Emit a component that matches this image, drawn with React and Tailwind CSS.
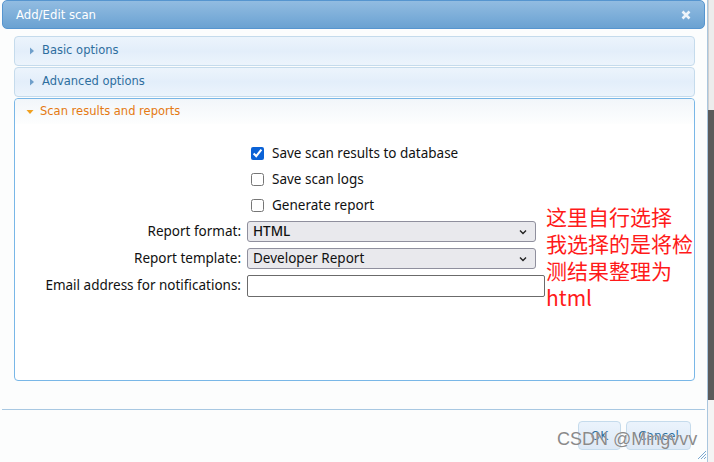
import React from 'react';

const ui = { fontFamily: '"DejaVu Sans", Verdana, sans-serif' };
const form = { fontFamily: '"Noto Sans", Tahoma, sans-serif' };

function Arrow({ open, color }) {
    return open ? (
        <svg width="8" height="8" viewBox="0 0 8 8" className="shrink-0">
            <path d="M0.5 2 L7.5 2 L4 6 Z" fill={color} />
        </svg>
    ) : (
        <svg width="8" height="8" viewBox="0 0 8 8" className="shrink-0">
            <path d="M2 0.5 L6 4 L2 7.5 Z" fill={color} />
        </svg>
    );
}

function Chevron() {
    return (
        <svg width="10" height="10" viewBox="0 0 10 10" className="shrink-0">
            <path d="M2 3.5 L5 6.5 L8 3.5" fill="none" stroke="#222" strokeWidth="1.4" />
        </svg>
    );
}

function ClosedPanel({ title }) {
    return (
        <div className="h-[30px] flex items-center gap-[6px] pl-[13px] rounded-[4px] border border-[#c5dbec] bg-gradient-to-b from-[#ecf4fc] via-[#e3eefa] to-[#ecf4fc] text-[#2e6e9e] text-[11.5px]" style={ui}>
            <Arrow color="#6f9fca" />
            <span>{title}</span>
        </div>
    );
}

function Check({ checked, label }) {
    return (
        <label className="h-[26px] flex items-center gap-[8px] pl-[4px]">
            <input type="checkbox" defaultChecked={checked} className="w-[13px] h-[13px] m-0 accent-[#0b62d6]" />
            <span>{label}</span>
        </label>
    );
}

function Row({ label, children }) {
    return (
        <div className="flex items-center gap-[6px] h-[27px]">
            <div className="w-[226px] text-right">{label}</div>
            {children}
        </div>
    );
}

function Select({ value, strong }) {
    return (
        <div className="w-[289px] h-[21px] flex items-center justify-between pl-[5px] pr-[7px] rounded-[3px] border border-[#8f8f9d] bg-[#e9e9ed] text-[#111]">
            <span className={strong ? 'font-medium' : ''}>{value}</span>
            <Chevron />
        </div>
    );
}

export default function App() {
    return (
        <div className="w-[714px] h-[462px] relative overflow-hidden bg-white flex">
            <div className="w-[708px] h-full flex flex-col bg-[#fcfdfd] border-r border-[#aac6de]">
                {/* title bar */}
                <div className="mx-[2px] h-[29px] shrink-0 flex items-center justify-between px-[13px] rounded-[5px] border border-[#5695cf] bg-gradient-to-b from-[#92bce1] to-[#6aa2d2] text-white">
                    <span className="text-[13px]" style={{ fontFamily: '"DejaVu Sans Condensed", "DejaVu Sans", sans-serif' }}>Add/Edit scan</span>
                    <svg width="10" height="10" viewBox="0 0 10 10">
                        <path d="M1.5 1.5 L8.5 8.5 M8.5 1.5 L1.5 8.5" stroke="#eef4fa" strokeWidth="2.6" />
                    </svg>
                </div>

                {/* accordion */}
                <div className="flex flex-col gap-[1px] px-[14px] pt-[7px] pr-[12px]">
                    <ClosedPanel title="Basic options" />
                    <ClosedPanel title="Advanced options" />
                    <div className="h-[283px] rounded-[4px] border border-[#79b7e7] bg-white flex flex-col">
                        <div className="h-[25px] flex items-center gap-[6px] pl-[11px] rounded-t-[4px] bg-gradient-to-b from-[#f2f6fa] to-[#fdfefe] text-[#e57a13] text-[11.5px]" style={ui}>
                            <Arrow open color="#f0a020" />
                            <span>Scan results and reports</span>
                        </div>
                        <div className="pt-[16px] text-[13.5px] text-[#111]" style={form}>
                            <div className="pl-[232px] flex flex-col">
                                <Check checked label="Save scan results to database" />
                                <Check label="Save scan logs" />
                                <Check label="Generate report" />
                            </div>
                            <Row label="Report format:">
                                <Select value="HTML" strong />
                            </Row>
                            <Row label="Report template:">
                                <Select value="Developer Report" />
                            </Row>
                            <Row label="Email address for notifications:">
                                <input type="text" className="w-[298px] h-[22px] rounded-[2px] border border-[#6b6b6b] bg-white outline-none" />
                            </Row>
                        </div>
                    </div>
                </div>

                {/* footer */}
                <div className="mt-[28px] mx-[2px] border-t border-[#a8c8e2] flex justify-end gap-[5px] pt-[11px] pr-[14px] text-[12px] text-[#2e6e9e]" style={ui}>
                    <button className="w-[43px] h-[29px] rounded-[4px] border border-[#c5dbec] bg-gradient-to-b from-[#ebf3fc] to-[#dde9f6]">OK</button>
                    <button className="w-[65px] h-[29px] rounded-[4px] border border-[#c5dbec] bg-gradient-to-b from-[#ebf3fc] to-[#dde9f6]">Cancel</button>
                </div>
            </div>

            {/* right strip of the window behind */}
            <div className="flex-1 flex flex-col">
                <div className="h-[110px] bg-[#ececec] border-l border-[#d0d0d0]" />
                <div className="h-[290px] bg-[#5b5b5b]" />
                <div className="flex-1 bg-[#f4f4f4]" />
            </div>

            {/* resize grip */}
            <svg width="10" height="10" viewBox="0 0 10 10" className="absolute left-[697px] top-[450px]">
                <path d="M9 1 L1 9 M9 4 L4 9 M9 7 L7 9" stroke="#7aa7d0" strokeWidth="1" />
            </svg>

            {/* red annotation */}
            <div className="absolute left-[546px] top-[203px] text-[21px] leading-[27px] text-[#ff1a1a]" style={{ fontFamily: '"Noto Sans CJK SC", sans-serif' }}>
                <div>这里自行选择</div>
                <div>我选择的是将检</div>
                <div>测结果整理为</div>
                <div>html</div>
            </div>

            {/* watermark */}
            <div className="absolute left-[557px] top-[426px] text-[18px] text-[#8a8a8a] [text-shadow:0_0_1px_#fff]" style={{ fontFamily: '"Liberation Sans", Arial, sans-serif' }}>
                CSDN @Mingvvv
            </div>
        </div>
    );
}
